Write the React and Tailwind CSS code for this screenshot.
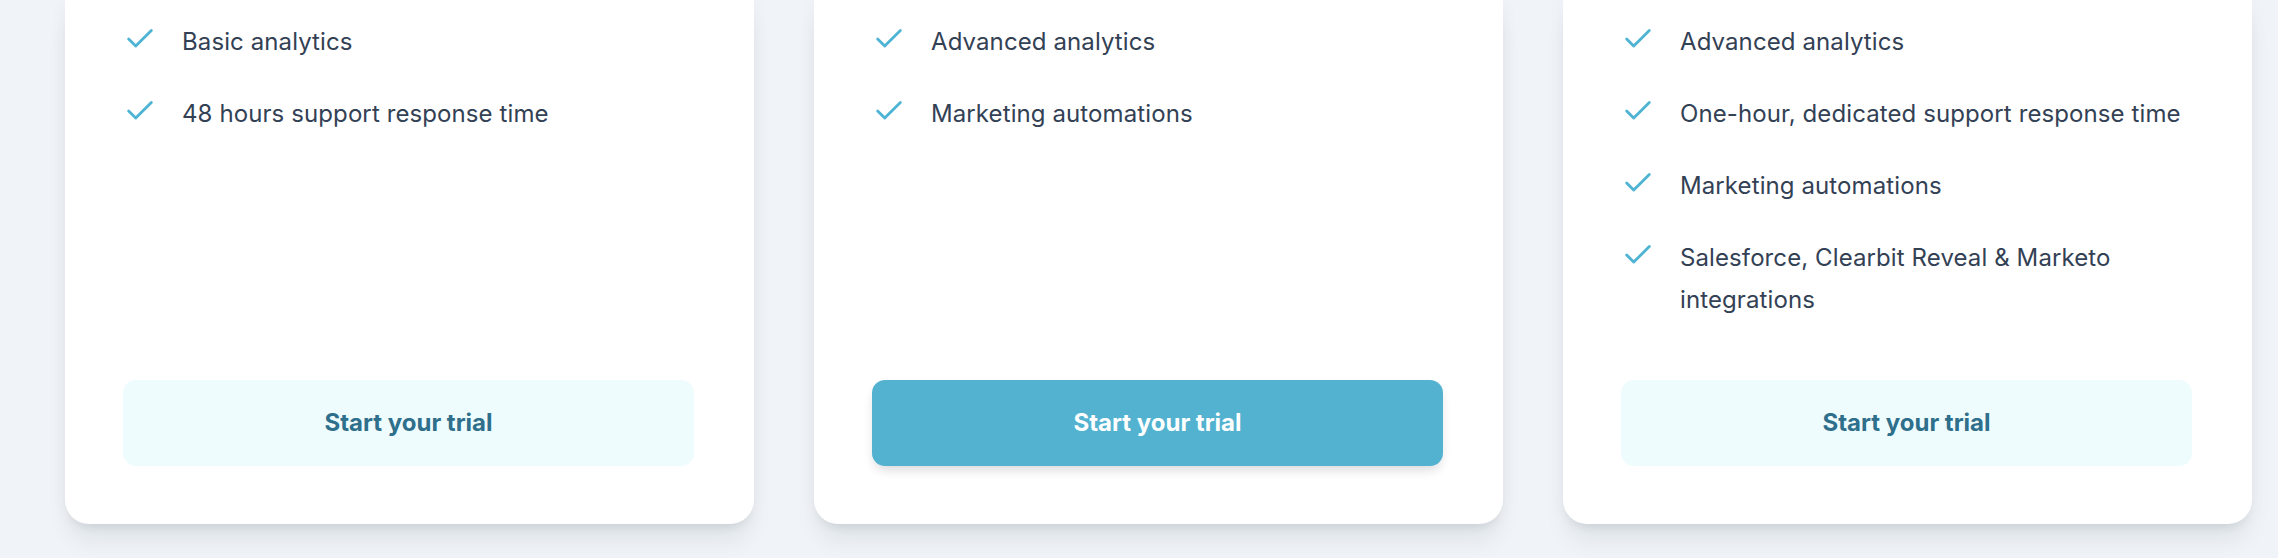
import React from "react";

const plans = [
  {
    features: ["Basic analytics", "48 hours support response time"],
    primary: false
  },
  {
    features: ["Advanced analytics", "Marketing automations"],
    primary: true
  },
  {
    features: [
      "Advanced analytics",
      "One-hour, dedicated support response time",
      "Marketing automations",
      "Salesforce, Clearbit Reveal & Marketo integrations"
    ],
    primary: false
  }
];

function CheckIcon() {
  return (
    <svg
      viewBox="0 0 24 24"
      fill="none"
      stroke="#4fb4d3"
      strokeWidth="2"
      strokeLinecap="round"
      strokeLinejoin="round"
      className="w-[34px] h-[34px] shrink-0 mt-[1px]"
    >
      <path d="M20 6 9 17l-5-5" />
    </svg>
  );
}

function PlanCard({ plan }) {
  return (
    <div className="w-[689px] shrink-0 flex flex-col bg-white rounded-b-[24px] pl-[58px] pr-[60px] pt-[21px] pb-[58px] shadow-[0_20px_25px_-5px_rgba(15,23,42,0.08),0_8px_10px_-6px_rgba(15,23,42,0.08),0_0_18px_rgba(15,23,42,0.04)]">
      <ul className="flex flex-col gap-[30px] mb-[59px]">
        {plan.features.map((item, index) => {
          return (
            <li key={index} className="flex items-start gap-[25px]">
              <CheckIcon />
              <p className="text-[24px] leading-[42px] tracking-[0.1px] text-[#334155]">{item}</p>
            </li>
          );
        })}
      </ul>
      <button
        className={
          plan.primary
            ? "mt-auto h-[86px] w-full rounded-[13px] bg-[#52b2cf] text-white text-[24px] font-bold shadow-[0_6px_12px_-3px_rgba(15,23,42,0.18)]"
            : "mt-auto h-[86px] w-full rounded-[13px] bg-[#effcfe] text-[#2e6f8c] text-[24px] font-bold"
        }
      >
        Start your trial
      </button>
    </div>
  );
}

export default function App() {
  return (
    <div
      className="w-[2278px] h-[558px] bg-[#f0f4f8] overflow-hidden"
      style={{ fontFamily: "Inter, 'Noto Sans', sans-serif" }}
    >
      <div className="flex items-stretch gap-[60px] pl-[65px]">
        {plans.map((plan, index) => {
          return <PlanCard key={index} plan={plan} />;
        })}
      </div>
    </div>
  );
}
